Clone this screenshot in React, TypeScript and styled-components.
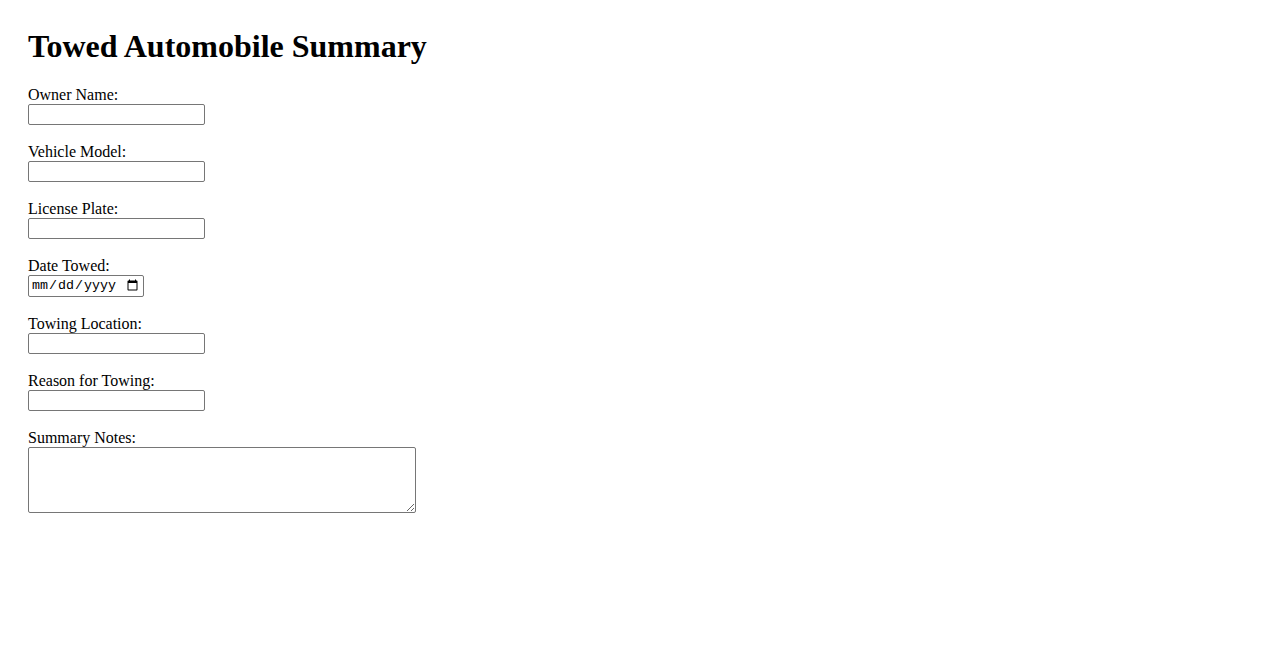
import styled, { createGlobalStyle } from "styled-components";

const GlobalStyle = createGlobalStyle`
  html, body {
    margin: 0;
    background: #fff;
  }

  body {
    font-family: "Liberation Serif", "Times New Roman", serif;
    font-size: 16px;
    color: #000;
  }
`;

const Page = styled.main`
  padding: 28px;
`;

const Title = styled.h1`
  margin: 0 0 21px;
  font-size: 32px;
  line-height: 37px;
  font-weight: bold;
`;

const Form = styled.form`
  display: flex;
  flex-direction: column;
  gap: 18px;
`;

const Field = styled.div`
  display: flex;
  flex-direction: column;
  align-items: flex-start;
`;

const Label = styled.label`
  line-height: 18px;
`;

const Input = styled.input<{ $w?: number; $mono?: boolean }>`
  box-sizing: border-box;
  width: ${(p) => p.$w ?? 177}px;
  height: ${(p) => (p.$mono ? 22 : 21)}px;
  margin: 0;
  padding: 1px 2px;
  border: 1px solid #767676;
  border-radius: 2px;
  background: #fff;
  font-family: ${(p) =>
    p.$mono ? `"Liberation Mono", "DejaVu Sans Mono", monospace` : `"Liberation Sans", Arial, sans-serif`};
  font-size: 13.33px;
  color: #000;
`;

const TextArea = styled.textarea`
  box-sizing: border-box;
  width: 388px;
  height: 66px;
  margin: 0;
  padding: 2px;
  border: 1px solid #767676;
  border-radius: 2px;
  font-family: "Liberation Mono", monospace;
  font-size: 13.33px;
`;

const fields = [
  { id: "owner", label: "Owner Name:", type: "text" },
  { id: "model", label: "Vehicle Model:", type: "text" },
  { id: "plate", label: "License Plate:", type: "text" },
  { id: "date", label: "Date Towed:", type: "date" },
  { id: "location", label: "Towing Location:", type: "text" },
  { id: "reason", label: "Reason for Towing:", type: "text" },
];

export default function App() {
  return (
    <>
      <GlobalStyle />
      <Page>
        <Title>Towed Automobile Summary</Title>
        <Form>
          {fields.map((f) => (
            <Field key={f.id}>
              <Label htmlFor={f.id}>{f.label}</Label>
              {f.type === "date" ? (
                <Input id={f.id} type="date" $w={116} $mono />
              ) : (
                <Input id={f.id} type="text" />
              )}
            </Field>
          ))}
          <Field>
            <Label htmlFor="notes">Summary Notes:</Label>
            <TextArea id="notes" />
          </Field>
        </Form>
      </Page>
    </>
  );
}
